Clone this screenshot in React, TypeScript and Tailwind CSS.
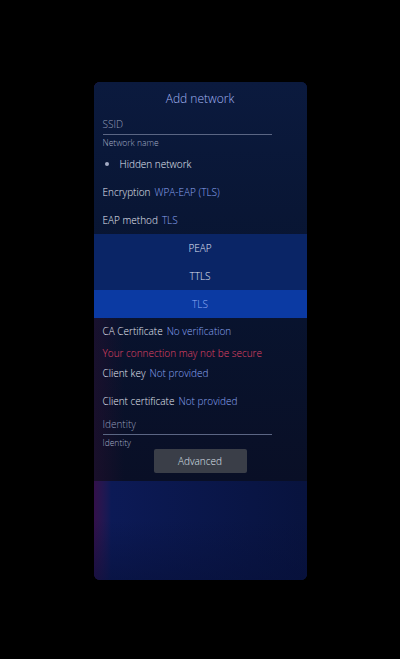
import React from 'react';

const font = { fontFamily: '"Open Sans", Lato, "Liberation Sans", sans-serif' };

const Row: React.FC<{ label: string; value: string; className?: string }> = ({ label, value, className }) => (
  <div className={`flex items-center gap-[4px] px-[9px] text-[10px] font-light ${className ?? ''}`}>
    <span className="text-[#e6e9f5]">{label}</span>
    <span className="text-[#8ca6f4]">{value}</span>
  </div>
);

const TextField: React.FC<{ placeholder: string; label: string }> = ({ placeholder, label }) => (
  <div className="px-[9px] font-light">
    <div className="text-[10px] leading-[14px] text-[#949dba]">{placeholder}</div>
    <div className="mt-[3px] h-px w-[169px] bg-[#5b6684]" />
    <div className="mt-[2px] text-[8.5px] leading-[12px] text-[#a3acc6]">{label}</div>
  </div>
);

export default function App() {
  const methods = ['PEAP', 'TTLS', 'TLS'];

  return (
    <div className="h-[659px] w-[400px] bg-black pt-[82px]" style={font}>
      <div className="relative mx-auto flex h-[498px] w-[213px] flex-col overflow-hidden rounded-[6px] bg-[#0b1745]">
        {/* wallpaper glow */}
        <div className="absolute inset-0 bg-gradient-to-r from-[#33104a] via-[#0c1a56] via-[8%] to-[#08133e]" />
        <div className="absolute inset-x-0 bottom-0 h-[60px] bg-gradient-to-b from-transparent to-[#07103a]/60" />

        {/* dialog */}
        <div className="relative flex h-[399px] flex-col bg-gradient-to-b from-[#0b1a3e] via-[#081430] to-[#090f26]">
          <div className="absolute bottom-0 left-0 top-[200px] w-[30px] bg-gradient-to-r from-[#2a0f2e]/50 to-transparent" />
          <div className="relative pt-[8px] text-center text-[12px] font-light leading-[18px] text-[#a2b4f2]">Add network</div>

          <div className="relative mt-[9px]">
            <TextField placeholder="SSID" label="Network name" />
          </div>

          <div className="relative mt-[5px] flex h-[20px] items-center px-[9px] text-[10px] font-light text-[#e6e9f5]">
            <span className="ml-[2px] mr-[11px] h-[4px] w-[4px] rounded-full bg-[#a3abc4]" />
            Hidden network
          </div>

          <Row label="Encryption" value="WPA-EAP (TLS)" className="relative mt-[8px] h-[20px]" />
          <Row label="EAP method" value="TLS" className="relative mt-[8px] h-[20px]" />

          <div className="relative mt-[4px] flex flex-col bg-[#0a2566]">
            {methods.map((m) => (
              <div
                key={m}
                className={`flex h-[28px] items-center justify-center text-[10px] font-light ${
                  m === 'TLS' ? 'bg-[#0b3aa3] text-[#93adf8]' : 'text-[#e0e5f6]'
                }`}
              >
                {m}
              </div>
            ))}
          </div>

          <Row label="CA Certificate" value="No verification" className="relative mt-[3px] h-[20px]" />
          <div className="relative mt-[2px] flex h-[20px] items-center px-[9px] text-[10px] font-light text-[#e04466]">
            Your connection may not be secure
          </div>
          <Row label="Client key" value="Not provided" className="relative h-[20px]" />
          <Row label="Client certificate" value="Not provided" className="relative mt-[8px] h-[20px]" />

          <div className="relative mt-[6px]">
            <TextField placeholder="Identity" label="Identity" />
          </div>

          <div className="relative flex justify-center">
            <div className="flex h-[24px] w-[93px] items-center justify-center rounded-[2px] bg-[#3a3e48] text-[10px] font-light text-[#dde1ec]">
              Advanced
            </div>
          </div>
        </div>
      </div>
    </div>
  );
}
